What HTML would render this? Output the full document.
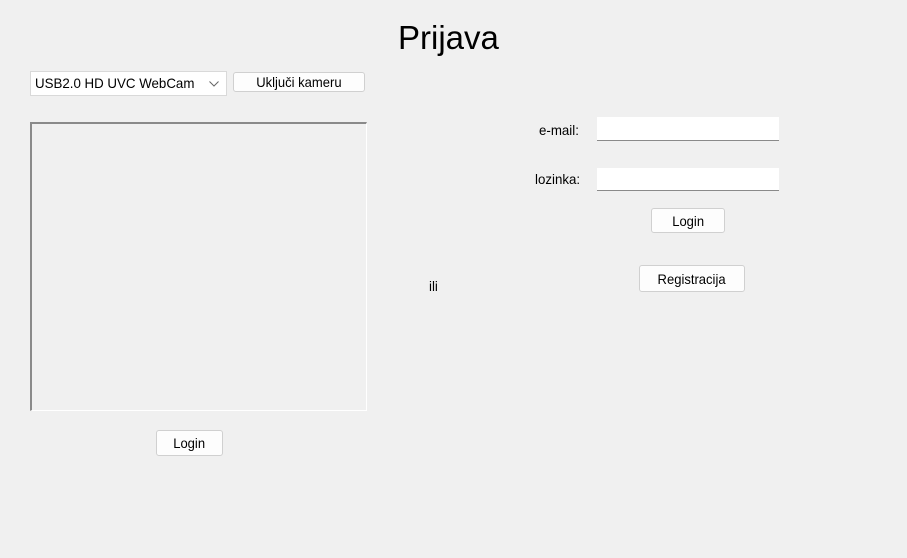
<!DOCTYPE html>
<html style="background:#f0f0f0"><head><meta charset="utf-8"><style>
html,body{background:#f0f0f0}
body{margin:0;width:907px;height:558px;font-family:"Liberation Sans",sans-serif;position:relative;overflow:hidden;color:#000}
.a{position:absolute;box-sizing:border-box}
.t{font-size:14px;line-height:1;white-space:nowrap;transform:scaleX(0.95);transform-origin:left top}
.btn{background:#fdfdfd;border:1px solid #d0d0d0;border-radius:3px;font-size:14px;display:flex;align-items:center;justify-content:center}
.btn span{transform:scaleX(0.93);display:inline-block}
.tb{background:#fff;border-bottom:1px solid #8a8a8a}
</style></head><body>
<div class="a" style="left:398px;top:21px;font-size:33px;line-height:1">Prijava</div>
<div class="a" style="left:30px;top:71px;width:197px;height:25px;background:#fff;border:1px solid #d9d9d9"></div>
<div class="a t" style="left:35px;top:76px">USB2.0 HD UVC WebCam</div>
<svg class="a" style="left:209px;top:81px" width="10" height="6"><path d="M0.5 0.5 L5 5 L9.5 0.5" stroke="#666" fill="none" stroke-width="1"/></svg>
<div class="a btn" style="left:233px;top:72px;width:132px;height:20px"><span>Uključi kameru</span></div>
<div class="a" style="left:30px;top:122px;width:337px;height:289px;border-left:2px solid #8a8a8a;border-top:2px solid #8a8a8a;border-right:1px solid #fff;border-bottom:1px solid #fff"></div>
<div class="a btn" style="left:156px;top:430px;width:67px;height:26px"><span>Login</span></div>
<div class="a t" style="left:539px;top:123px">e-mail:</div>
<div class="a tb" style="left:597px;top:117px;width:182px;height:24px"></div>
<div class="a t" style="left:535px;top:172px">lozinka:</div>
<div class="a tb" style="left:597px;top:168px;width:182px;height:23px"></div>
<div class="a btn" style="left:651px;top:208px;width:74px;height:25px"><span>Login</span></div>
<div class="a btn" style="left:639px;top:265px;width:106px;height:27px"><span>Registracija</span></div>
<div class="a t" style="left:429px;top:279px">ili</div>
</body></html>
